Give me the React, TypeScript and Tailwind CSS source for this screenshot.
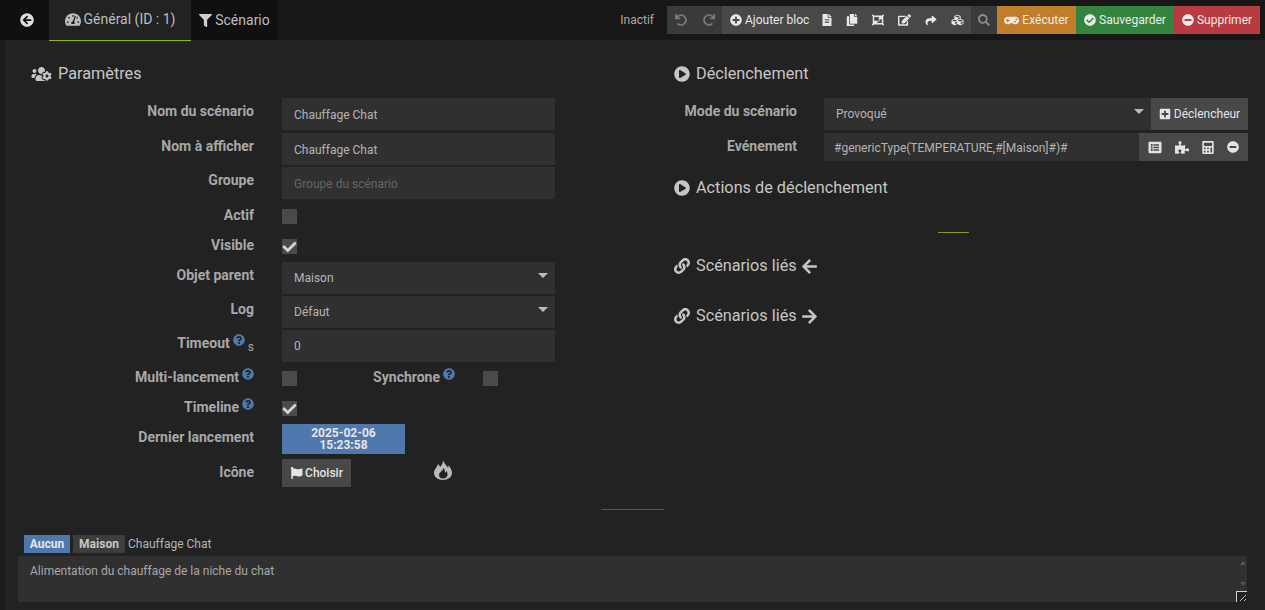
import React from "react";
import {
  FaArrowCircleLeft,
  FaArrowLeft,
  FaArrowRight,
  FaCalculator,
  FaCheck,
  FaCheckCircle,
  FaCopy,
  FaCubes,
  FaEdit,
  FaFileAlt,
  FaFilter,
  FaFlag,
  FaGamepad,
  FaLink,
  FaListAlt,
  FaMinusCircle,
  FaObjectGroup,
  FaPlayCircle,
  FaPlusCircle,
  FaPlusSquare,
  FaPuzzlePiece,
  FaQuestionCircle,
  FaRedo,
  FaSearch,
  FaShare,
  FaTachometerAlt,
  FaUndo,
  FaUsersCog,
} from "react-icons/fa";

function Help() {
  return <FaQuestionCircle className="relative -top-[4px] ml-[3px] inline h-[12px] w-[12px] text-[#4f79ad]" />;
}

function Label({ children, w = "w-[254px]" }: { children: React.ReactNode; w?: string }) {
  return (
    <div className={`${w} shrink-0 pt-[4px] text-right text-[14px] leading-[18px] font-bold whitespace-nowrap text-[#a8a8a8]`}>
      {children}
    </div>
  );
}

function Row({ label, h, children }: { label: React.ReactNode; h: string; children: React.ReactNode }) {
  return (
    <div className={`flex ${h}`}>
      <Label>{label}</Label>
      <div className="ml-[28px] flex-1">{children}</div>
    </div>
  );
}

function Field({ value, muted, caret, low }: { value: string; muted?: boolean; caret?: boolean; low?: boolean }) {
  return (
    <div className={`relative flex h-[32px] w-[273px] items-center bg-[#303030] pl-[12px] text-[12px] ${low ? "pt-[2px]" : ""} ${muted ? "text-[#666666]" : "text-[#b4b4b4]"}`}>
      {value}
      {caret && <Caret />}
    </div>
  );
}

function Caret() {
  return <span className="absolute top-[11px] right-[7px] h-0 w-0 border-x-[5px] border-t-[5px] border-x-transparent border-t-[#bbbbbb]" />;
}

function Check({ on }: { on?: boolean }) {
  return (
    <div className="relative mt-[7px] h-[15px] w-[15px] bg-[#4a4a4a]">
      {on && <FaCheck className="absolute top-[1px] left-0 h-[14px] w-[15px] text-[#d4d4d4]" />}
    </div>
  );
}

function SectionTitle({ icon, children, iconW = "w-[16px]" }: { icon: React.ReactNode; children: React.ReactNode; iconW?: string }) {
  return (
    <div className="flex h-[24px] items-center text-[16.25px] font-normal whitespace-nowrap text-[#c6c6c6]">
      <span className={`mr-[6px] flex justify-center text-[#c6c6c6] ${iconW}`}>{icon}</span>
      {children}
    </div>
  );
}

function ActionBtn({ bg, icon, label, w }: { bg: string; icon: React.ReactNode; label: string; w: string }) {
  return (
    <div className={`flex h-[28px] items-center justify-center gap-[3px] text-[12px] text-[#ececec] ${bg} ${w}`}>
      {icon}
      {label}
    </div>
  );
}

// flamme creuse, absente telle quelle des packs d'icones
function Flame() {
  return (
    <svg viewBox="0 0 18 20" className="mt-[1px] ml-[83px] h-[20px] w-[18px] text-[#b9b9b9]" fill="currentColor" fillRule="evenodd">
      <path d="M9 0 C10 4 13 5 14 8 C14.5 7 14.5 6 14.5 5 C17 8 18 11 18 13 C18 17 14 20 9 20 C4 20 0 17 0 13 C0 9 3 8 4 4 C5 5 6 6 6 7 C8 5 9 3 9 0 Z M9.5 8 C9 11 5 12 5 15 C5 17.5 7 18.5 9 18.5 C11.5 18.5 13.5 17 13.5 14.5 C13.5 13 13 12 12.5 11 C12 12 11.5 12.5 11 13 C11 11 10.5 9 9.5 8 Z" />
    </svg>
  );
}

export default function App() {
  const ic = "h-[12px] w-[12px]";
  return (
    <div className="flex h-[610px] w-[1265px] flex-col overflow-hidden bg-[#222222] font-['Roboto',sans-serif]">
      {/* barre du haut */}
      <div className="flex h-[40px] shrink-0 items-start bg-[#171717]">
        <div className="flex h-[40px] w-[49px] items-center justify-center bg-[#101010] pl-[5px] text-[#dedede]">
          <FaArrowCircleLeft className="h-[14px] w-[14px]" />
        </div>
        <div className="flex h-[41px] w-[142px] items-center justify-center gap-[3px] border-b border-[#8cb820] bg-[#222222] pb-[1px] text-[14px] text-[#bdbdbd]">
          <FaTachometerAlt className="h-[15px] w-[16px]" />
          Général (ID : 1)
        </div>
        <div className="flex h-[40px] w-[87px] items-center justify-center gap-[3px] bg-[#101010] text-[14px] text-[#bdbdbd]">
          <FaFilter className="h-[13px] w-[13px] text-[#cfcfcf]" />
          Scénario
        </div>
        <div className="ml-auto flex h-[28px] items-center self-center">
          <span className="mr-[13px] text-[12px] text-[#a8a8a8]">Inactif</span>
          <div className="flex h-[28px] w-[55px] items-center justify-center gap-[16px] bg-[#3a3a3a] text-[#7a7a7a]">
            <FaUndo className={ic} />
            <FaRedo className={ic} />
          </div>
          <div className="flex h-[28px] w-[249px] items-center bg-[#484848] pl-[8px] text-[12px] text-[#e8e8e8]">
            <FaPlusCircle className="mr-[3px] h-[12px] w-[12px]" />
            Ajouter bloc
            <div className="ml-[13px] flex items-center gap-[14px]">
              <FaFileAlt className="h-[12px] w-[10px]" />
              <FaCopy className="h-[12px] w-[12px]" />
              <FaObjectGroup className="h-[12px] w-[12px]" />
              <FaEdit className="h-[12px] w-[13px]" />
              <FaShare className="h-[11px] w-[12px]" />
              <FaCubes className="h-[12px] w-[13px]" />
            </div>
          </div>
          <div className="flex h-[28px] w-[26px] items-center justify-center bg-[#3a3a3a] text-[#8a8a8a]">
            <FaSearch className={ic} />
          </div>
          <ActionBtn w="w-[79px]" bg="bg-[#c27d2b]" icon={<FaGamepad className="h-[13px] w-[15px]" />} label="Exécuter" />
          <ActionBtn w="w-[98px]" bg="bg-[#33843f]" icon={<FaCheckCircle className={ic} />} label="Sauvegarder" />
          <ActionBtn w="w-[86px]" bg="bg-[#b73b40]" icon={<FaMinusCircle className={ic} />} label="Supprimer" />
          <div className="w-[5px]" />
        </div>
      </div>

      <div className="relative flex flex-1 flex-col border-l-[5px] border-[#1c1c1c]">
        <div className="flex">
          <div className="w-[669px] shrink-0 pt-[22px] pl-[26px]">
            <SectionTitle iconW="w-[21px]" icon={<FaUsersCog className="h-[16px] w-[21px]" />}>Paramètres</SectionTitle>
          </div>
          <div className="pt-[22px]">
            <SectionTitle icon={<FaPlayCircle className="h-[16px] w-[16px]" />}>Déclenchement</SectionTitle>
          </div>
        </div>

        <div className="flex">
          {/* colonne gauche */}
          <div className="mt-[12px] w-[669px] shrink-0">
            <div className="-ml-[5px] flex flex-col">
              <Row label="Nom du scénario" h="h-[35px]"><Field value="Chauffage Chat" low /></Row>
              <Row label="Nom à afficher" h="h-[34px]"><Field value="Chauffage Chat" low /></Row>
              <Row label="Groupe" h="h-[35px]"><Field value="Groupe du scénario" muted low /></Row>
              <Row label="Actif" h="h-[30px]"><Check /></Row>
              <Row label="Visible" h="h-[30px]"><Check on /></Row>
              <Row label="Objet parent" h="h-[34px]"><Field value="Maison" caret /></Row>
              <Row label="Log" h="h-[34px]"><Field value="Défaut" caret /></Row>
              <Row
                label={
                  <>
                    Timeout
                    <Help />
                    <span className="relative top-[3px] ml-[3px] text-[12px] font-normal">s</span>
                  </>
                }
                h="h-[34px]"
              >
                <Field value="0" />
              </Row>
              <div className="flex h-[30px]">
                <Label>
                  Multi-lancement
                  <Help />
                </Label>
                <div className="ml-[28px] w-[91px]">
                  <Check />
                </div>
                <Label w="w-[82px]">
                  Synchrone
                  <Help />
                </Label>
                <div className="ml-[28px]">
                  <Check />
                </div>
              </div>
              <Row
                label={
                  <>
                    Timeline
                    <Help />
                  </>
                }
                h="h-[30px]"
              >
                <Check on />
              </Row>
              <Row label="Dernier lancement" h="h-[35px]">
                <div className="flex h-[30px] w-[123px] flex-col items-center justify-center bg-[#4f79ad] text-[12px] leading-[12px] font-bold text-[#e6e6e6]">
                  <span>2025-02-06</span>
                  <span>15:23:58</span>
                </div>
              </Row>
              <Row label="Icône" h="h-[28px]">
                <div className="flex items-start">
                  <div className="flex h-[28px] w-[69px] items-center justify-center gap-[2px] bg-[#484848] text-[12px] font-medium text-[#e4e4e4]">
                    <FaFlag className="h-[12px] w-[13px]" />
                    Choisir
                  </div>
                  <Flame />
                </div>
              </Row>
            </div>
          </div>

          {/* colonne droite */}
          <div className="mt-[12px] flex-1">
            <div className="flex h-[35px]">
              <div className="w-[123px] shrink-0 pt-[4px] text-right text-[14px] leading-[18px] font-bold whitespace-nowrap text-[#a8a8a8]">Mode du scénario</div>
              <div className="relative ml-[27px] flex h-[32px] w-[327px] items-center bg-[#303030] pl-[12px] text-[12px] text-[#b4b4b4]">
                Provoqué
                <Caret />
              </div>
              <div className="flex h-[32px] w-[97px] items-center justify-center gap-[3px] bg-[#484848] text-[12px] text-[#e4e4e4]">
                <FaPlusSquare className="h-[12px] w-[12px]" />
                Déclencheur
              </div>
            </div>
            <div className="flex h-[28px]">
              <div className="w-[123px] shrink-0 pt-[4px] text-right text-[14px] leading-[18px] font-bold text-[#a8a8a8]">Evénement</div>
              <div className="ml-[27px] flex h-[28px] w-[315px] items-center bg-[#303030] pt-[1px] pl-[10px] text-[12px] whitespace-nowrap text-[#b4b4b4]">
                #genericType(TEMPERATURE,#[Maison]#)#
              </div>
              <div className="flex h-[28px] w-[109px] items-center justify-center gap-[13px] bg-[#484848] text-[#e4e4e4]">
                <FaListAlt className="h-[13px] w-[14px]" />
                <FaPuzzlePiece className="h-[13px] w-[14px]" />
                <FaCalculator className="h-[13px] w-[12px]" />
                <FaMinusCircle className="h-[12px] w-[12px]" />
              </div>
            </div>
            <div className="mt-[15px]">
              <SectionTitle icon={<FaPlayCircle className="h-[16px] w-[16px]" />}>Actions de déclenchement</SectionTitle>
            </div>
            <div className="mt-[32px] ml-[264px] h-px w-[31px] bg-[#7a9e25]" />
            <div className="mt-[21px]">
              <SectionTitle icon={<FaLink className="h-[16px] w-[16px]" />}>
                Scénarios liés
                <FaArrowLeft className="ml-[5px] h-[17px] w-[15px]" />
              </SectionTitle>
            </div>
            <div className="mt-[26px]">
              <SectionTitle icon={<FaLink className="h-[16px] w-[16px]" />}>
                Scénarios liés
                <FaArrowRight className="ml-[5px] h-[17px] w-[15px]" />
              </SectionTitle>
            </div>
          </div>
        </div>

        {/* bas de page */}
        <div className="mt-[22px] ml-[596px] h-px w-[63px] bg-[#555555]" />
        <div className="mt-[25px] ml-[19px] flex h-[18px] items-center text-[12px] text-[#b4b4b4]">
          <span className="flex h-[18px] w-[46px] items-center justify-center bg-[#4f79ad] font-bold text-[#e6e6e6]">Aucun</span>
          <span className="ml-[3px] flex h-[18px] w-[52px] items-center justify-center bg-[#3d3d3d] font-bold text-[#c6c6c6]">Maison</span>
          <span className="ml-[3px]">Chauffage Chat</span>
        </div>
        <div className="relative mt-[3px] ml-[13px] h-[46px] w-[1229px] bg-[#303030] pt-[7px] pl-[12px] text-[12px] leading-[16px] text-[#a8a8a8]">
          Alimentation du chauffage de la niche du chat
          <span className="absolute top-[5px] right-[1px] h-0 w-0 border-x-[3px] border-b-[4px] border-x-transparent border-b-[#555555]" />
          <span className="absolute right-[1px] bottom-[16px] h-0 w-0 border-x-[3px] border-t-[4px] border-x-transparent border-t-[#555555]" />
          <span className="absolute right-0 bottom-0 h-[11px] w-[11px] border-t border-l border-[#d0d0d0] bg-[#222222]">
            <svg viewBox="0 0 10 10" className="h-full w-full" stroke="#bbbbbb" strokeWidth="1">
              <path d="M3 9 L9 3 M7 9 L9 7" />
            </svg>
          </span>
        </div>
      </div>
    </div>
  );
}
